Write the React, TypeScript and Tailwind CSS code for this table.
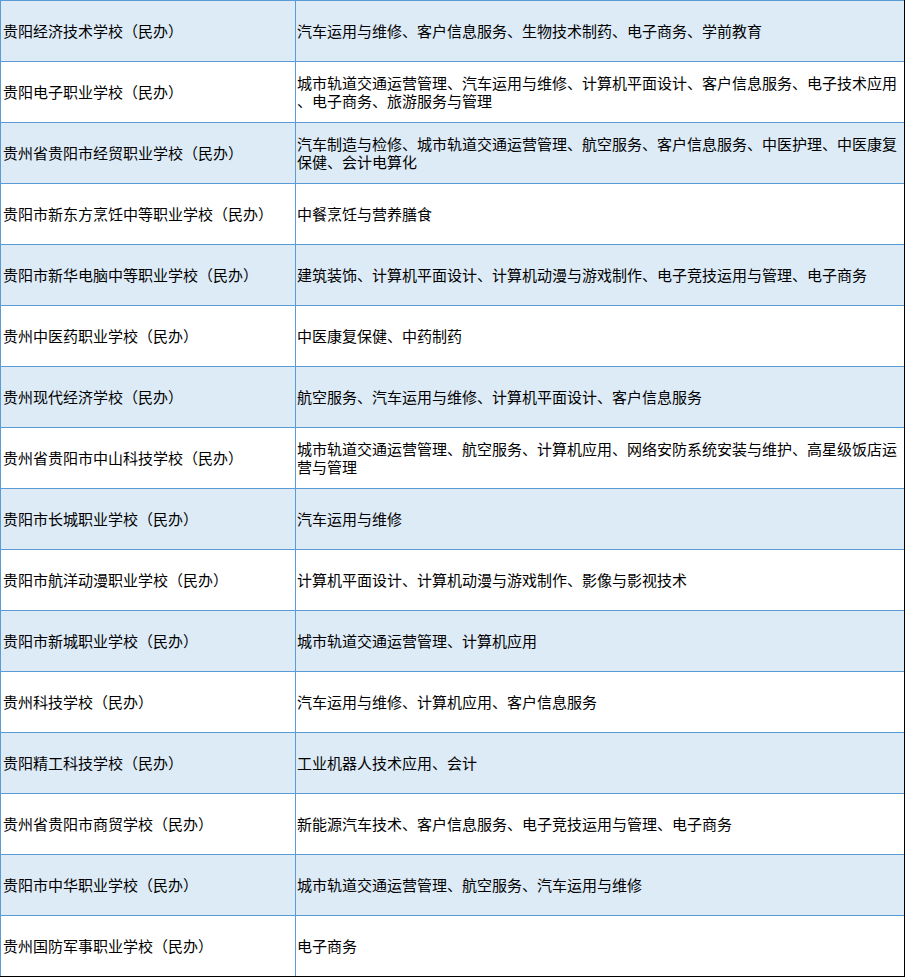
const schools: { name: string; majors: string[] }[] = [
  { name: '贵阳经济技术学校（民办）', majors: ['汽车运用与维修、客户信息服务、生物技术制药、电子商务、学前教育'] },
  {
    name: '贵阳电子职业学校（民办）',
    majors: ['城市轨道交通运营管理、汽车运用与维修、计算机平面设计、客户信息服务、电子技术应用', '、电子商务、旅游服务与管理'],
  },
  {
    name: '贵州省贵阳市经贸职业学校（民办）',
    majors: ['汽车制造与检修、城市轨道交通运营管理、航空服务、客户信息服务、中医护理、中医康复', '保健、会计电算化'],
  },
  { name: '贵阳市新东方烹饪中等职业学校（民办）', majors: ['中餐烹饪与营养膳食'] },
  {
    name: '贵阳市新华电脑中等职业学校（民办）',
    majors: ['建筑装饰、计算机平面设计、计算机动漫与游戏制作、电子竞技运用与管理、电子商务'],
  },
  { name: '贵州中医药职业学校（民办）', majors: ['中医康复保健、中药制药'] },
  { name: '贵州现代经济学校（民办）', majors: ['航空服务、汽车运用与维修、计算机平面设计、客户信息服务'] },
  {
    name: '贵州省贵阳市中山科技学校（民办）',
    majors: ['城市轨道交通运营管理、航空服务、计算机应用、网络安防系统安装与维护、高星级饭店运', '营与管理'],
  },
  { name: '贵阳市长城职业学校（民办）', majors: ['汽车运用与维修'] },
  { name: '贵阳市航洋动漫职业学校（民办）', majors: ['计算机平面设计、计算机动漫与游戏制作、影像与影视技术'] },
  { name: '贵阳市新城职业学校（民办）', majors: ['城市轨道交通运营管理、计算机应用'] },
  { name: '贵州科技学校（民办）', majors: ['汽车运用与维修、计算机应用、客户信息服务'] },
  { name: '贵阳精工科技学校（民办）', majors: ['工业机器人技术应用、会计'] },
  { name: '贵州省贵阳市商贸学校（民办）', majors: ['新能源汽车技术、客户信息服务、电子竞技运用与管理、电子商务'] },
  { name: '贵阳市中华职业学校（民办）', majors: ['城市轨道交通运营管理、航空服务、汽车运用与维修'] },
  { name: '贵州国防军事职业学校（民办）', majors: ['电子商务'] },
];

export default function App() {
  return (
    <div
      className="w-[905px] h-[977px] bg-white text-black border-r border-b border-black overflow-hidden text-[15px] leading-[18px]"
      style={{ fontFamily: '"Noto Sans CJK SC", "Noto Sans", sans-serif' }}
    >
      {schools.map((s, i) => (
        <div
          key={s.name}
          className={`flex h-[61px] border-t border-[#5b9bd5] ${i % 2 === 0 ? 'bg-[#ddebf7]' : 'bg-white'}`}
        >
          {/* school name */}
          <div className="w-[295px] shrink-0 border-l border-[#5b9bd5] flex items-center pl-[2px] whitespace-nowrap overflow-hidden">
            {s.name}
          </div>
          {/* majors */}
          <div className="flex-1 border-l border-[#5b9bd5] flex flex-col justify-center pl-[1px] whitespace-nowrap overflow-hidden">
            {s.majors.map((line) => (
              <span key={line}>{line}</span>
            ))}
          </div>
        </div>
      ))}
    </div>
  );
}
